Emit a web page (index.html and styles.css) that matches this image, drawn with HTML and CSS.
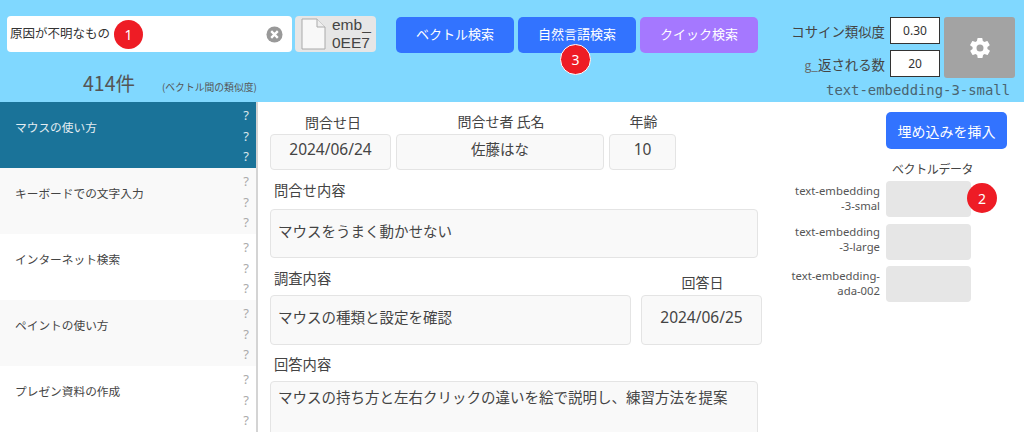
FILE: index.html
```html
<!DOCTYPE html>
<html lang="ja">
<head>
<meta charset="utf-8">
<title>問合せ検索</title>
<link rel="stylesheet" href="styles.css">
</head>
<body>
<header class="top">
  <div class="search-col">
    <div class="search-row">
      <div class="search-box">
        <span class="search-text">原因が不明なもの</span>
        <svg class="clear" viewBox="0 0 18 18" width="17" height="17"><circle cx="9" cy="9" r="8.5" fill="#999"/><path d="M5.5 5.5l7 7M12.500 5.500l-7 7" stroke="#fff" stroke-width="2.500"/></svg>
        <span class="badge badge-one">1</span>
      </div>
      <div class="file-chip">
        <svg class="file-icon" viewBox="0 0 25 32" width="25" height="32"><path d="M1 1h15l8 8v22H1z" fill="#f8f8f8" stroke="#aaa"/><path d="M16 1v8h8" fill="#eee" stroke="#aaa"/></svg>
        <span class="file-name">emb_<br>0EE7</span>
      </div>
    </div>
    <div class="count-row">
      <span class="count">414件</span>
      <span class="count-note">(ベクトル間の類似度)</span>
    </div>
  </div>
  <div class="actions">
    <button class="btn btn-blue">ベクトル検索</button>
    <button class="btn btn-blue btn-badged">自然言語検索<span class="badge badge-three">3</span></button>
    <button class="btn btn-purple">クイック検索</button>
  </div>
  <div class="settings">
    <div class="settings-row">
      <div class="params">
        <label class="param"><span>コサイン類似度</span><span class="param-val">0.30</span></label>
        <label class="param"><span><small class="param-g">g_</small>返される数</span><span class="param-val">20</span></label>
      </div>
      <button class="gear">
        <svg viewBox="0 0 24 24" width="24" height="24"><path fill="#fff" d="M19.400 13a7.500 7.500 0 0 0 0-2l2.100-1.600a.5.5 0 0 0 .1-.6l-2-3.500a.5.5 0 0 0-.6-.2l-2.500 1a7.300 7.300 0 0 0-1.700-1l-.4-2.600a.5.5 0 0 0-.5-.5h-4a.5.5 0 0 0-.5.400l-.4 2.700a7.300 7.300 0 0 0-1.700 1l-2.500-1a.5.5 0 0 0-.6.200l-2 3.500a.5.5 0 0 0 .1.600L4.600 11a7.500 7.500 0 0 0 0 2l-2.100 1.600a.5.5 0 0 0-.1.600l2 3.500a.5.500 0 0 0 .6.200l2.500-1a7.300 7.300 0 0 0 1.700 1l.4 2.600a.5.500 0 0 0 .5.500h4a.5.500 0 0 0 .5-.4l.4-2.700a7.300 7.300 0 0 0 1.700-1l2.500 1a.5.500 0 0 0 .6-.2l2-3.500a.5.500 0 0 0-.1-.6zM12 15.500a3.500 3.500 0 1 1 0-7 3.500 3.500 0 0 1 0 7z"/></svg>
      </button>
    </div>
    <div class="model-name">text-embedding-3-small</div>
  </div>
</header>
<div class="body">
  <nav class="side">
    <div class="side-item active"><span class="side-title">マウスの使い方</span><span class="marks"><i>?</i><i>?</i><i>?</i></span></div>
    <div class="side-item alt"><span class="side-title">キーボードでの文字入力</span><span class="marks"><i>?</i><i>?</i><i>?</i></span></div>
    <div class="side-item"><span class="side-title">インターネット検索</span><span class="marks"><i>?</i><i>?</i><i>?</i></span></div>
    <div class="side-item alt"><span class="side-title">ペイントの使い方</span><span class="marks"><i>?</i><i>?</i><i>?</i></span></div>
    <div class="side-item"><span class="side-title">プレゼン資料の作成</span><span class="marks"><i>?</i><i>?</i><i>?</i></span></div>
  </nav>
  <main class="form">
    <div class="row row-head">
      <div class="field f-date"><div class="cap cap-low">問合せ日</div><div class="box box-s">2024/06/24</div></div>
      <div class="field f-name"><div class="cap">問合せ者&nbsp;氏名</div><div class="box box-s box-jp">佐藤はな</div></div>
      <div class="field f-age"><div class="cap">年齢</div><div class="box box-s">10</div></div>
    </div>
    <div class="cap-left cap-q">問合せ内容</div>
    <div class="box box-l box-q">マウスをうまく動かせない</div>
    <div class="row row-survey">
      <div class="field f-survey"><div class="cap-left">調査内容</div><div class="box box-l box-m">マウスの種類と設定を確認</div></div>
      <div class="field f-date2"><div class="cap">回答日</div><div class="box box-m box-c">2024/06/25</div></div>
    </div>
    <div class="cap-left cap-a">回答内容</div>
    <div class="box box-l box-a">マウスの持ち方と左右クリックの違いを絵で説明し、練習方法を提案</div>
  </main>
  <aside class="vectors">
    <button class="btn btn-blue btn-embed">埋め込みを挿入</button>
    <div class="vec-title">ベクトルデータ</div>
    <div class="vec-row"><span class="vec-label">text-embedding<br>-3-smal</span><span class="vec-box"></span><span class="badge badge-two">2</span></div>
    <div class="vec-row"><span class="vec-label vec-label-high">text-embedding<br>-3-large</span><span class="vec-box"></span></div>
    <div class="vec-row"><span class="vec-label">text-embedding-<br>ada-002</span><span class="vec-box"></span></div>
  </aside>
</div>
</body>
</html>
```
FILE: styles.css
```css
* { box-sizing: border-box; }
html, body { margin: 0; height: 432px; overflow: hidden; }
body { font-family: "Noto Sans CJK JP", "Noto Sans", sans-serif; color: #444; background: #fff; }

.top { height: 102px; background: #80d8ff; display: flex; padding: 16px 9px 0 7px; }
.search-col { width: 369px; }
.search-row { display: flex; gap: 3px; }
.search-box { position: relative; width: 285px; height: 36px; background: #fff; border-radius: 4px; display: flex; align-items: center; justify-content: space-between; padding: 0 9px 0 3px; }
.search-text { font-size: 12.500px; color: #333; margin-top: -3px; }
.clear { display: block; }
.file-chip { width: 81px; height: 36px; background: #e6e6e6; border-radius: 4px; display: flex; align-items: center; padding: 0 0 0 6px; gap: 6px; }
.file-icon { display: block; flex: none; }
.file-name { font-family: "Liberation Sans", sans-serif; font-size: 15.500px; line-height: 18px; color: #444; margin-top: -1px; }
.count-row { display: flex; align-items: flex-end; margin: 18px 0 0 76px; }
.count { font-size: 19.500px; line-height: 26px; color: #555; width: 79px; }
.count-note { font-size: 9.800px; line-height: 17px; color: #555; }

.actions { display: flex; gap: 4px; margin-left: 20px; padding-top: 1px; align-items: flex-start; }
.btn { font-family: inherit; border: 0; border-radius: 5px; color: #fff; font-size: 13px; cursor: pointer; padding: 0; }
.actions .btn { width: 118px; height: 36px; padding-bottom: 3px; }
.btn-blue { background: #3273ff; }
.btn-purple { background: #a578ff; }
.btn-badged { position: relative; }

.badge { position: absolute; border-radius: 50%; background: #ee1c25; color: #fff; display: flex; align-items: center; justify-content: center; font-family: "Noto Sans", sans-serif; font-size: 14px; }
.badge-one { left: 107px; top: 4px; width: 29px; height: 29px; }
.badge-three { left: 42px; top: 27px; width: 31px; height: 31px; border: 1px solid #fff; }

.settings { margin-left: auto; width: 232px; padding-top: 1px; }
.settings-row { display: flex; justify-content: flex-end; gap: 4px; }
.params { display: flex; flex-direction: column; gap: 6px; }
.param { display: flex; justify-content: flex-end; align-items: center; gap: 5px; font-size: 13.400px; color: #444; height: 27px; white-space: nowrap; }
.param-g { font-size: 12px; color: #666; }
.param-val { width: 50px; height: 27px; border: 1px solid #333; background: #fff; font-family: "Noto Sans", sans-serif; font-size: 12px; color: #333; display: flex; align-items: center; justify-content: center; }
.gear { width: 71px; height: 61px; background: #a3a3a3; border: 0; border-radius: 3px; display: flex; align-items: center; justify-content: center; padding: 0; }
.model-name { font-family: "DejaVu Sans Mono", monospace; font-size: 13.900px; line-height: 16px; color: #4a6470; text-align: right; margin: 4px 5px 0 -30px; white-space: nowrap; }

.body { display: flex; height: 330px; }
.side { width: 258px; flex: none; border-right: 2px solid #d4d4d4; }
.side-item { height: 66px; display: flex; justify-content: space-between; padding: 0 7px 0 15px; font-size: 11.700px; color: #444; }
.side-item.alt { background: #f9f9f9; }
.side-item.active { background: #1a7399; color: #e4edf2; }
.side-title { margin-top: 15px; line-height: 20px; }
.marks { display: flex; flex-direction: column; align-items: center; color: #aaa; font-family: "Noto Sans", sans-serif; font-size: 13px; padding-top: 4px; }
.marks i { font-style: normal; display: block; height: 21px; line-height: 18px; }
.active .marks { color: #d8e6ec; }

.form { width: 504px; flex: none; padding: 0 0 0 12px; }
.row { display: flex; }
.row-head { gap: 5px; padding-top: 9px; align-items: flex-end; }
.field { flex: none; }
.f-date { width: 121px; }
.f-name { width: 208px; }
.f-age { width: 67px; }
.f-survey { width: 361px; }
.f-date2 { width: 121px; margin-left: 10px; }
.cap { text-align: center; font-size: 14px; line-height: 20px; color: #444; margin-bottom: 3px; padding-left: 2px; }
.cap-low { margin-bottom: 2px; padding-left: 5px; }
.cap-left { font-size: 14.300px; line-height: 20px; color: #444; padding-left: 4px; }
.box { background: #f9f9f9; border: 1px solid #e4e4e4; border-radius: 4px; font-size: 14.500px; color: #444; }
.box-s { height: 36px; text-align: center; line-height: 28px; font-family: "Noto Sans", sans-serif; font-size: 15.500px; }
.box-jp { font-family: "Noto Sans CJK JP", sans-serif; font-size: 14.500px; }
.box-l { padding: 0 7px; }
.cap-q { margin-top: 10px; }
.box-q { height: 49px; margin-top: 9px; width: 488px; line-height: 42px; }
.row-survey { margin-top: 11px; align-items: flex-end; }
.f-survey .cap-left { margin-bottom: 6px; position: relative; top: -1px; }
.box-m { height: 50px; line-height: 42px; }
.box-c { text-align: center; font-family: "Noto Sans", sans-serif; font-size: 15.500px; }
.cap-a { margin-top: 9px; }
.box-a { height: 70px; width: 488px; margin-top: 7px; line-height: 30px; }

.vectors { flex: 1; padding: 10px 0 0 16px; }
.btn-embed { display: block; margin-left: 108px; width: 121px; height: 37px; font-size: 14px; }
.vec-title { margin: 11px 0 3px 114px; font-size: 12px; line-height: 18px; color: #444; letter-spacing: -.4px; }
.vec-row { position: relative; display: flex; width: 193px; height: 36px; margin-bottom: 6.500px; }
.vec-label { width: 102px; text-align: right; font-family: "Noto Sans", sans-serif; font-size: 11.300px; line-height: 15px; color: #555; padding-top: 2px; flex: none; white-space: nowrap; }
.vec-label-high { padding-top: 0; }
.vec-box { width: 85px; height: 36px; background: #e6e6e6; border-radius: 4px; margin-left: 6px; flex: none; }
.badge-two { left: 189px; top: 2px; width: 30px; height: 30px; }
```
